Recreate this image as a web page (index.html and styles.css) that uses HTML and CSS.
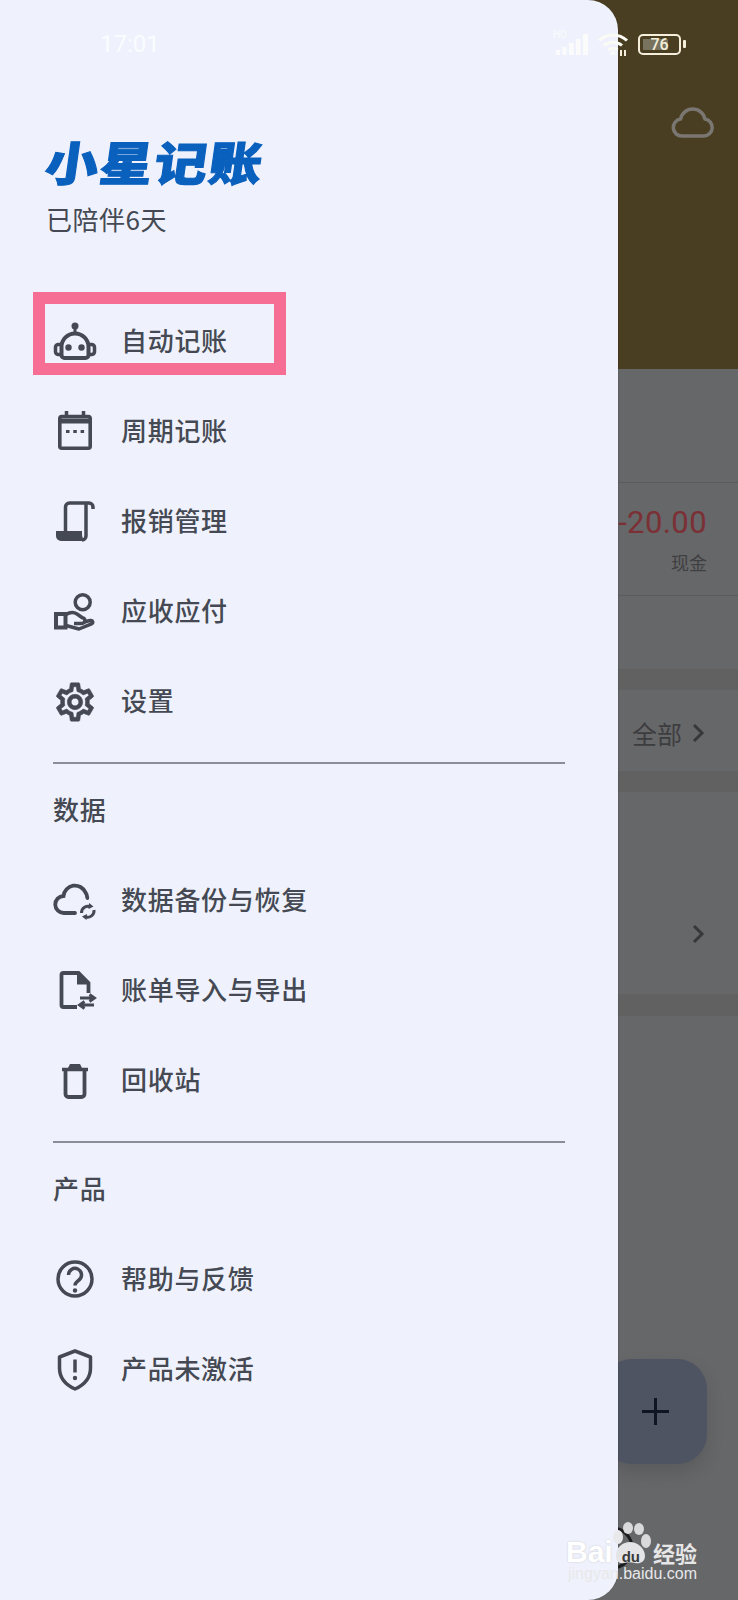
FILE: index.html
```html
<!doctype html>
<html>
<head>
  <meta charset="utf-8">
  <title>小星记账</title>
  <link rel="stylesheet" href="styles.css">
</head>
<body>
  <!-- dimmed page behind the drawer -->
  <div class="page">
    <div class="page-head">
      <svg class="cloud" viewBox="0 0 44 32" width="44" height="32"><path d="M11 29a8.500 8.500 0 0 1-1.500-16.900a12.500 12.500 0 0 1 24.500 0a8.500 8.500 0 0 1-1 16.900z" fill="none" stroke="#7a7772" stroke-width="3.500" stroke-linejoin="round"/></svg>
    </div>
    <div class="page-summary"></div>
    <div class="page-record">
      <div class="amount">-20.00</div>
      <div class="account">现金</div>
    </div>
    <div class="page-plain"></div>
    <div class="page-band"></div>
    <div class="page-more">全部 <svg viewBox="0 0 14 22" width="14" height="22"><path d="M3 3l8 8-8 8" fill="none" stroke="#38383b" stroke-width="3"/></svg></div>
    <div class="page-band"></div>
    <div class="page-card">
      <svg viewBox="0 0 14 22" width="14" height="22"><path d="M3 3l8 8-8 8" fill="none" stroke="#38383b" stroke-width="3"/></svg>
    </div>
    <div class="page-band tall"></div>
  </div>

  <div class="fab"><span class="fab-plus"></span></div>
  <svg class="stray-arc" viewBox="0 0 46 46" width="46" height="46"><circle cx="22" cy="23" r="20" fill="none" stroke="#1c1c1e" stroke-width="3"/></svg>

  <aside class="drawer">
    <header class="brand">
      <div class="logo">小星记账</div>
      <div class="days">已陪伴6天</div>
    </header>

    <div class="menu">
      <div class="item marked">
        <svg class="icon" viewBox="0 0 44 44"><circle cx="22" cy="6" r="3.500" fill="#454953"/><path d="M22 8v6" stroke="#454953" stroke-width="3"/><path d="M8.500 27a13.500 13.500 0 0 1 27 0v8a3 3 0 0 1-3 3h-21a3 3 0 0 1-3-3z" fill="none" stroke="#454953" stroke-width="4"/><path d="M8 24.500H5A3 3 0 0 0 2.500 27v5A3 3 0 0 0 5 34.500h3M36 24.500h3a3 3 0 0 1 2.500 2.500v5a3 3 0 0 1-2.500 2.500h-3" fill="none" stroke="#454953" stroke-width="3.500"/><circle cx="15.500" cy="27.500" r="3.200" fill="#454953"/><circle cx="28.500" cy="27.500" r="3.200" fill="#454953"/></svg>
        <span>自动记账</span>
      </div>
      <div class="item">
        <svg class="icon" viewBox="0 0 44 44"><rect x="6.800" y="6.500" width="30.400" height="31.700" rx="2" fill="none" stroke="#454953" stroke-width="3.600"/><path d="M6 11h32" stroke="#454953" stroke-width="5"/><path d="M13.500 1v6M30.500 1v6" stroke="#454953" stroke-width="3.500"/><path d="M13 21.500h3.500M20.300 21.500h3.500M27.600 21.500h3.500" stroke="#454953" stroke-width="3"/></svg>
        <span>周期记账</span>
      </div>
      <div class="item">
        <svg class="icon" viewBox="0 0 44 44"><path d="M12.500 32V7a4 4 0 0 1 4-4h19.500a4 4 0 0 1 4 4v2" fill="none" stroke="#454953" stroke-width="3.500"/><path d="M33 4v32a4 4 0 0 1-4 4" fill="none" stroke="#454953" stroke-width="3.500"/><path d="M3 31h26v3c0 3 1 5 3 7H8a5 5 0 0 1-5-5z" fill="#454953"/></svg>
        <span>报销管理</span>
      </div>
      <div class="item">
        <svg class="icon" viewBox="0 0 44 44"><circle cx="29.700" cy="12.300" r="7.500" fill="none" stroke="#454953" stroke-width="3.500"/><rect x="3" y="24" width="9.500" height="13.500" fill="none" stroke="#454953" stroke-width="4"/><path d="M13 24.500c4-2.500 8-2.500 11-.5l5 3.500c2.500.5 3 2 3 3.500s-2 2.500-4 2.500h-7" fill="none" stroke="#454953" stroke-width="3.500"/><path d="M31 32l6-1.500c3-.5 3.500 2 1.500 3.300L26 39l-13-3.500" fill="none" stroke="#454953" stroke-width="3.500" stroke-linejoin="round"/></svg>
        <span>应收应付</span>
      </div>
      <div class="item">
        <svg class="icon" viewBox="0.500 0.500 23 23"><path fill="#454953" stroke="#454953" stroke-width="0.300" d="M19.430 12.980c.04-.32.07-.64.07-.98 0-.34-.03-.66-.07-.98l2.110-1.650c.19-.15.24-.42.12-.64l-2-3.460c-.09-.16-.26-.25-.44-.25-.06 0-.12.01-.17.03l-2.490 1c-.52-.4-1.080-.73-1.690-.98l-.38-2.650C14.460 2.180 14.250 2 14 2h-4c-.25 0-.46.18-.49.42l-.38 2.650c-.61.25-1.170.59-1.690.98l-2.490-1c-.06-.02-.12-.03-.18-.03-.17 0-.34.09-.43.25l-2 3.460c-.13.22-.07.49.12.64l2.110 1.650c-.04.32-.07.65-.07.98 0 .33.03.66.07.98l-2.110 1.650c-.19.15-.24.42-.12.64l2 3.460c.09.16.26.25.44.25.06 0 .12-.01.17-.03l2.490-1c.52.4 1.080.73 1.690.98l.38 2.650c.03.24.24.42.49.42h4c.25 0 .46-.18.49-.42l.38-2.650c.61-.25 1.170-.59 1.690-.98l2.490 1c.06.02.12.03.18.03.17 0 .34-.09.43-.25l2-3.460c.12-.22.07-.49-.12-.64l-2.110-1.650zm-1.980-1.710c.04.31.05.52.05.73 0 .21-.02.43-.05.73l-.14 1.130.89.7 1.080.84-.7 1.210-1.270-.51-1.040-.42-.9.68c-.43.32-.84.56-1.250.73l-1.060.43-.16 1.130-.2 1.350h-1.400l-.19-1.350-.16-1.130-1.060-.43c-.43-.18-.83-.41-1.230-.71l-.91-.7-1.060.43-1.270.51-.7-1.210 1.080-.84.89-.7-.14-1.130c-.03-.31-.05-.54-.05-.74s.02-.43.05-.73l.14-1.130-.89-.7-1.080-.84.7-1.210 1.270.51 1.040.42.9-.68c.43-.32.84-.56 1.250-.73l1.060-.43.16-1.130.2-1.350h1.390l.19 1.350.16 1.130 1.060.43c.43.18.83.41 1.230.71l.91.7 1.060-.43 1.270-.51.7 1.210-1.070.85-.89.7.14 1.130zM12 8c-2.210 0-4 1.790-4 4s1.790 4 4 4 4-1.790 4-4-1.790-4-4-4zm0 6c-1.100 0-2-.9-2-2s.9-2 2-2 2 .9 2 2-.9 2-2 2z"/></svg>
        <span>设置</span>
      </div>
    </div>

    <div class="divider"></div>
    <div class="label">数据</div>

    <div class="menu">
      <div class="item">
        <svg class="icon" viewBox="0 0 44 44"><path d="M22 34H11a8.500 8.500 0 0 1-.5-17a11.500 11.500 0 0 1 22-3.500q1.600 2 1.800 5.500" fill="none" stroke="#454953" stroke-width="3.800" stroke-linecap="round"/><path d="M28.500 34a6.500 6.500 0 0 1 9.500-6M41 31a6.500 6.500 0 0 1-9.500 6.500" fill="none" stroke="#454953" stroke-width="3"/><path d="M36 24l4.500 3.500-5 2.500zM33.500 41l-4.500-3.500 5-2.500z" fill="#454953"/></svg>
        <span>数据备份与恢复</span>
      </div>
      <div class="item">
        <svg class="icon" viewBox="0 0 44 44"><path d="M24 38H10.500a2 2 0 0 1-2-2V6a2 2 0 0 1 2-2h15l10 10v10" fill="none" stroke="#454953" stroke-width="3.800"/><path d="M24 3l12 11.500v1H24z" fill="#454953"/><path d="M27 29h14M36.500 25.500l5 3.500-5 3.500M41 36H27M31.500 32.500l-5 3.500 5 3.500" fill="none" stroke="#454953" stroke-width="2.800"/></svg>
        <span>账单导入与导出</span>
      </div>
      <div class="item">
        <svg class="icon" viewBox="0 0 44 44"><path d="M9 10.500h26" stroke="#454953" stroke-width="3.500"/><path d="M17 5h10l2 4H15z" fill="#454953"/><path d="M12.500 12v23a3 3 0 0 0 3 3h13a3 3 0 0 0 3-3V12" fill="none" stroke="#454953" stroke-width="3.800"/></svg>
        <span>回收站</span>
      </div>
    </div>

    <div class="divider"></div>
    <div class="label">产品</div>

    <div class="menu">
      <div class="item">
        <svg class="icon" viewBox="0 0 44 44"><circle cx="22" cy="21" r="17" fill="none" stroke="#454953" stroke-width="3.500"/><path d="M15.500 17a6.500 6.500 0 1 1 10.500 5c-2.500 2-4 3-4 5.500" fill="none" stroke="#454953" stroke-width="3.500"/><circle cx="22" cy="32.500" r="2.200" fill="#454953"/></svg>
        <span>帮助与反馈</span>
      </div>
      <div class="item">
        <svg class="icon" viewBox="0 0 44 44"><path d="M22 3l15.500 6v11c0 10-6.500 17-15.500 21C13 37 6.500 30 6.500 20V9z" fill="none" stroke="#454953" stroke-width="3.500" stroke-linejoin="round"/><path d="M22 11.500v13" stroke="#454953" stroke-width="3.500"/><circle cx="22" cy="30" r="2.200" fill="#454953"/></svg>
        <span>产品未激活</span>
      </div>
    </div>
  </aside>

  <div class="status">
    <span class="time">17:01</span>
    <div class="status-right">
      <div class="signal">
        <span class="hd">HD</span>
        <svg viewBox="0 0 36 24" width="36" height="24"><path d="M3 18h4v5H3zM9.500 15h4v8h-4zM16 11h4.500v12H16zM23 7h4.500v16H23zM30 2h5v21h-5z" fill="#fbfbfb"/></svg>
      </div>
      <svg viewBox="0 0 32 24" width="32" height="24"><path d="M2 8.500c8-7.500 20-7.500 28 0M7 13.500c5-4.500 13-4.500 18 0M11.500 18c2.500-2 6.500-2 9 0" fill="none" stroke="#fbfbf6" stroke-width="3"/><path d="M16 19l3.500 3.500h-7z" fill="#fbfbf6"/><path d="M24 24v-6M28 24v-6" stroke="#f4eeda" stroke-width="2"/></svg>
      <div class="battery">
        <div class="battery-body"><span class="battery-fill"></span><span class="battery-num">76</span></div>
        <span class="battery-nub"></span>
      </div>
    </div>
  </div>

  <div class="mark">
    <svg class="paw" viewBox="0 0 42 44" width="42" height="44"><ellipse cx="8" cy="15" rx="5" ry="7" fill="#e9e9ec"/><ellipse cx="18" cy="6" rx="5" ry="6" fill="#d9d9dc"/><ellipse cx="29" cy="7" rx="5" ry="6" fill="#d9d9dc"/><ellipse cx="36" cy="19" rx="5" ry="7" fill="#d9d9dc"/><path d="M6 34c0-9 7-14 14-14s15 6 15 14c0 6-5 8-10 7-4-1-7-1-11 0-5 1-8-2-8-7z" fill="#e4e4e6"/></svg>
    <div class="mark-line">
      <span class="mark-bai">Bai</span><span class="mark-du">du</span><span class="mark-cn">经验</span>
    </div>
    <div class="mark-url">jingyan.baidu.com</div>
  </div>
</body>
</html>
```

FILE: styles.css
```css
/* ========== Base ========== */
html, body {
  margin: 0;
  padding: 0;
  width: 738px;
  height: 1600px;
  overflow: hidden;
}

body {
  position: relative;
  background: #666769;
  font-family: "Noto Sans CJK SC", "Noto Sans", sans-serif;
  color: #454953;
}

/* ========== Page behind the drawer ========== */
.page {
  display: flex;
  flex-direction: column;
  height: 1600px;
}

.page-head {
  height: 369px;
  box-sizing: border-box;
  padding: 107px 23px 0 0;
  background: #4a3e22;
  display: flex;
  justify-content: flex-end;
  align-items: flex-start;
}

.page-summary {
  height: 113px;
  border-bottom: 1px solid #5c5c5e;
}

.page-record {
  height: 113px;
  box-sizing: border-box;
  padding: 17px 31px 0 0;
  border-bottom: 1px solid #5c5c5e;
  text-align: right;
}

.amount {
  font-family: Roboto, sans-serif;
  font-size: 31px;
  line-height: 46px;
  letter-spacing: 0.4px;
  color: #7b3035;
}

.account {
  font-size: 18px;
  line-height: 26px;
  margin-top: 3px;
  color: #3f3f42;
}

.page-plain {
  height: 73px;
}

.page-band {
  height: 21px;
  background: #616162;
}

.page-band.tall {
  height: 22px;
}

.page-more {
  height: 81px;
  box-sizing: border-box;
  padding: 4px 33px 0 0;
  display: flex;
  align-items: center;
  justify-content: flex-end;
  gap: 9px;
  font-size: 25px;
  color: #3d3d40;
}

.page-card {
  height: 202px;
  padding-right: 33px;
  padding-top: 131px;
  box-sizing: border-box;
  display: flex;
  justify-content: flex-end;
  align-items: flex-start;
}

/* floating add button, half under the drawer */
.fab {
  position: absolute;
  left: 602px;
  top: 1359px;
  width: 105px;
  height: 105px;
  border-radius: 30px;
  background: #4f5462;
  box-shadow: 0 8px 18px rgba(0, 0, 0, 0.12);
}

.fab-plus {
  position: absolute;
  left: 40px;
  top: 39px;
  width: 27px;
  height: 27px;
  background:
    linear-gradient(#111522, #111522) center / 100% 3px no-repeat,
    linear-gradient(#111522, #111522) center / 3px 100% no-repeat;
}

.stray-arc {
  position: absolute;
  left: 590px;
  top: 1525px;
}

/* ========== Drawer ========== */
.drawer {
  position: absolute;
  left: 0;
  top: 0;
  width: 618px;
  height: 1600px;
  box-sizing: border-box;
  padding: 0 53px;
  background: #eff2fc;
  border-radius: 0 30px 30px 0;
  box-shadow: 1px 0 1px rgba(0, 0, 0, 0.08);
}

.brand {
  height: 297px;
  box-sizing: border-box;
  padding-top: 131px;
}

.logo {
  font-size: 53px;
  line-height: 60px;
  font-weight: 900;
  letter-spacing: 1.5px;
  color: #0a60bd;
  margin-left: -7px;
  -webkit-text-stroke: 1.2px #0a60bd;
  transform: skewX(-8deg) scaleY(0.88);
}

.days {
  font-size: 26px;
  line-height: 32px;
  letter-spacing: 0.5px;
  margin: 12px 0 0 -7px;
}

.item {
  height: 90px;
  display: flex;
  align-items: center;
  gap: 24px;
  font-size: 26px;
  font-weight: 500;
  letter-spacing: 0.7px;
}

.item span {
  margin-bottom: 5px;
}

.icon {
  width: 44px;
  height: 44px;
  flex: none;
}

/* pink rectangle drawn over the first row of the screenshot */
.marked {
  position: relative;
}

.marked::after {
  content: "";
  position: absolute;
  left: -20px;
  top: -5px;
  width: 229px;
  height: 59px;
  border: 12px solid #f76e95;
}

.divider {
  height: 2px;
  margin-top: 15px;
  background: #8b8e97;
}

.label {
  height: 92px;
  box-sizing: border-box;
  padding-top: 28px;
  font-size: 26px;
  font-weight: 500;
  line-height: 34px;
  letter-spacing: 0.7px;
}

/* ========== Status bar ========== */
.status {
  position: absolute;
  left: 0;
  top: 30px;
  width: 738px;
  height: 28px;
  box-sizing: border-box;
  padding: 0 52px 0 100px;
  display: flex;
  justify-content: space-between;
  align-items: center;
}

.time {
  font-family: Roboto, sans-serif;
  font-size: 24px;
  color: #fbfcff;
}

.status-right {
  display: flex;
  align-items: center;
  gap: 8px;
}

.signal {
  position: relative;
  width: 36px;
  height: 24px;
}

.hd {
  position: absolute;
  left: 0;
  top: -3px;
  font-family: Roboto, sans-serif;
  font-size: 10px;
  color: #fbfbfb;
}

.battery {
  display: flex;
  align-items: center;
  gap: 2px;
  margin-left: 1px;
}

.battery-body {
  position: relative;
  width: 39px;
  height: 17px;
  border: 2px solid #f4eeda;
  border-radius: 5px;
  overflow: hidden;
}

.battery-fill {
  position: absolute;
  left: 3px;
  top: 3px;
  bottom: 3px;
  width: 25px;
  background: #77735f;
}

.battery-num {
  position: relative;
  display: block;
  text-align: center;
  font-family: Roboto, sans-serif;
  font-size: 16px;
  font-weight: 500;
  line-height: 17px;
  color: #f4eeda;
}

.battery-nub {
  width: 3px;
  height: 8px;
  border-radius: 1px;
  background: #f4eeda;
}

/* ========== Watermark ========== */
.mark {
  position: absolute;
  left: 566px;
  top: 1518px;
  width: 140px;
  height: 72px;
}

.paw {
  position: absolute;
  left: 44px;
  top: 4px;
}

.mark-line {
  position: absolute;
  left: 0;
  top: 20px;
  display: flex;
  align-items: center;
  height: 28px;
  white-space: nowrap;
}

.mark-bai {
  font-family: "Liberation Sans", sans-serif;
  font-weight: 700;
  font-size: 30px;
  color: #fff;
  text-shadow: 0 0 2px #c9c9cc;
}

.mark-du {
  margin: 9px 13px 0 9px;
  font-family: "Liberation Sans", sans-serif;
  font-weight: 700;
  font-size: 15px;
  color: #3a3a3a;
}

.mark-cn {
  font-size: 22px;
  font-weight: 700;
  color: #e6e6e6;
}

.mark-url {
  position: absolute;
  left: 2px;
  top: 47px;
  font-family: "Liberation Sans", sans-serif;
  font-size: 16px;
  color: #e8e8ea;
  white-space: nowrap;
}
```
